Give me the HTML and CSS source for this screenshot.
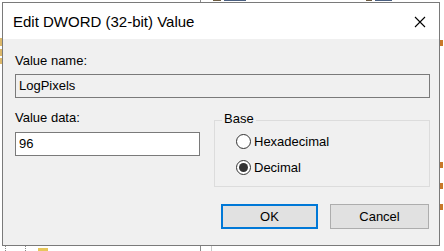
FILE: index.html
```html
<html lang="en">
<head>
    <meta charset="UTF-8">
    <meta name="viewport" content="width=device-width, initial-scale=1.0">
    <title>Edit DWORD (32-bit) Value</title>
    <link rel="stylesheet" href="styles.css">
</head>
<body>
    <!-- Registry editor showing behind the dialog -->
    <div class="backdrop">
        <div class="header-speck s1"></div>
        <div class="header-speck s2"></div>
        <div class="header-speck s3"></div>
        <div class="header-speck s4"></div>
        <div class="vline v1"></div>
        <div class="vline v2"></div>
        <div class="vline v3"></div>
        <div class="tree-folder f1"></div>
        <div class="tree-folder f2"></div>
        <div class="tree-folder f3"></div>
        <div class="tree-dots d1"></div>
        <div class="tree-dots d2"></div>
        <div class="tree-folder f4"></div>
        <div class="reg-icon r1"></div>
        <div class="reg-icon r2"></div>
        <div class="reg-icon r3"></div>
        <div class="reg-icon r4"></div>
    </div>

    <div class="dialog">
        <div class="title-bar">
            <span class="title">Edit DWORD (32-bit) Value</span>
            <svg class="close" width="12" height="12" viewBox="0 0 12 12">
                <path d="M1 1 L11 11 M11 1 L1 11" stroke="#000" stroke-width="1.1" fill="none"/>
            </svg>
        </div>
        <div class="dialog-body">
            <label class="label">Value name:</label>
            <div class="field readonly">LogPixels</div>

            <div class="data-row">
                <div class="data-col">
                    <label class="label">Value data:</label>
                    <div class="field editable">96</div>
                </div>
                <div class="group">
                    <span class="group-title">Base</span>
                    <div class="radio">
                        <span class="circle"></span>
                        <span>Hexadecimal</span>
                    </div>
                    <div class="radio">
                        <span class="circle checked"></span>
                        <span>Decimal</span>
                    </div>
                </div>
            </div>

            <div class="buttons">
                <button class="btn default">OK</button>
                <button class="btn">Cancel</button>
            </div>
        </div>
    </div>
</body>
</html>
```

FILE: styles.css
```css
/* Dialog over the registry editor */
body {
    margin: 0;
    padding: 0;
    width: 444px;
    height: 251px;
    overflow: hidden;
    position: relative;
    background-color: #fff;
    font-family: "Liberation Sans", Arial, sans-serif;
    font-size: 13px;
    color: #000;
}

.backdrop {
    position: absolute;
    left: 0;
    top: 0;
    width: 444px;
    height: 251px;
}

/* bottoms of the column titles peeking above the dialog */
.header-speck {
    position: absolute;
    top: 0;
    height: 1px;
    background-color: #6b5a40;
}

.s1 { left: 213px; width: 8px; }
.s2 { left: 224px; width: 22px; background-color: #4a5f80; }
.s3 { left: 366px; width: 6px; }
.s4 { left: 375px; width: 17px; background-color: #4a5f80; }

.vline {
    position: absolute;
    width: 1px;
    background-color: #8a8a8a;
}

.v1 { left: 200px; top: 0; height: 3px; }
.v2 { left: 200px; top: 246px; height: 5px; }
.v3 { left: 211px; top: 246px; height: 5px; background-color: #c8c8c8; }

.tree-folder {
    position: absolute;
    background-color: #dcb86a;
}

.f1 { left: 0; top: 38px; width: 2px; height: 8px; }
.f2 { left: 0; top: 49px; width: 2px; height: 7px; }
.f3 { left: 0; top: 58px; width: 2px; height: 6px; }
.f4 { left: 38px; top: 248px; width: 10px; height: 3px; background-color: #e7c65a; }

.tree-dots {
    position: absolute;
    top: 246px;
    width: 1px;
    height: 5px;
    border-left: 1px dotted #888;
}

.d1 { left: 5px; }
.d2 { left: 25px; }

.reg-icon {
    position: absolute;
    left: 440px;
    width: 3px;
    height: 6px;
    background-color: #c8782a;
}

.r1 { top: 40px; }
.r2 { top: 162px; }
.r3 { top: 183px; }
.r4 { top: 204px; }

.dialog {
    position: absolute;
    left: 2px;
    top: 2px;
    width: 436px;
    height: 242px;
    border: 1px solid #7a7a7a;
    background-color: #f0f0f0;
    display: flex;
    flex-direction: column;
}

.title-bar {
    height: 36px;
    background-color: #fff;
    display: flex;
    align-items: center;
    justify-content: space-between;
    padding: 0 13px 0 10px;
}

.title {
    font-size: 15px;
    padding-top: 1px;
}

.close {
    margin-top: 1px;
}

.dialog-body {
    padding: 14px 9px 0 12px;
}

.label {
    display: block;
    line-height: 15px;
}

.field {
    box-sizing: border-box;
    height: 24px;
    line-height: 22px;
    padding-left: 3px;
    border: 1px solid #7a7a7a;
}

.readonly {
    margin-top: 6px;
    background-color: #f0f0f0;
}

.editable {
    margin-top: 7px;
    background-color: #fff;
}

.data-row {
    display: flex;
    gap: 14px;
    margin-top: 12px;
}

.data-col {
    width: 185px;
}

.group {
    position: relative;
    box-sizing: border-box;
    width: 216px;
    height: 67px;
    margin-top: 10px;
    border: 1px solid #dcdcdc;
    padding: 13px 0 0 21px;
    display: flex;
    flex-direction: column;
    gap: 11px;
}

.group-title {
    position: absolute;
    left: 7px;
    top: -10px;
    padding: 0 2px;
    line-height: 15px;
    background-color: #f0f0f0;
}

.radio {
    display: flex;
    align-items: center;
    gap: 3px;
    height: 15px;
}

.circle {
    box-sizing: border-box;
    width: 15px;
    height: 15px;
    border: 1px solid #333;
    border-radius: 50%;
    background-color: #fff;
    display: flex;
    align-items: center;
    justify-content: center;
}

.circle.checked::after {
    content: "";
    width: 9px;
    height: 9px;
    border-radius: 50%;
    background-color: #333;
}

.buttons {
    display: flex;
    justify-content: flex-end;
    gap: 12px;
    margin-top: 17px;
    padding-right: 1px;
}

.btn {
    box-sizing: border-box;
    width: 99px;
    height: 25px;
    padding: 0;
    font-family: "Liberation Sans", Arial, sans-serif;
    font-size: 13px;
    color: #000;
    background-color: #e1e1e1;
    border: 1px solid #adadad;
    border-radius: 0;
}

.btn.default {
    width: 97px;
    border: 2px solid #0078d7;
}
```
